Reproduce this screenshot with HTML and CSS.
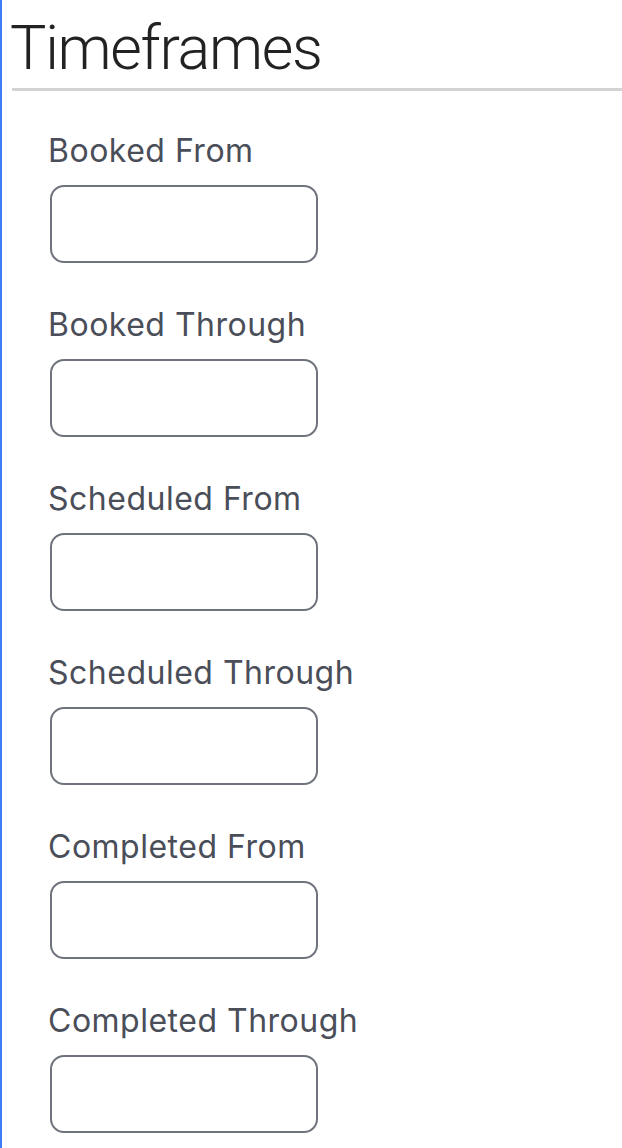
FILE: index.html
```html
<!DOCTYPE html>
<html>
<head>
<meta charset="utf-8">
<link rel="stylesheet" href="styles.css">
</head>
<body>
<div class="page">
  <h1 class="title">Timeframes</h1>
  <div class="fields">
    <div class="field"><label class="label">Booked From</label><input class="box" type="text"></div>
    <div class="field"><label class="label">Booked Through</label><input class="box" type="text"></div>
    <div class="field"><label class="label">Scheduled From</label><input class="box" type="text"></div>
    <div class="field"><label class="label">Scheduled Through</label><input class="box" type="text"></div>
    <div class="field"><label class="label">Completed From</label><input class="box" type="text"></div>
    <div class="field"><label class="label">Completed Through</label><input class="box" type="text"></div>
  </div>
</div>
</body>
</html>
```
FILE: styles.css
```css
html, body {
  margin: 0;
  padding: 0;
  background: #ffffff;
}
.page {
  min-height: 1148px;
  box-sizing: border-box;
  border-left: 2px solid #3d7cf5;
  padding-left: 10px;
}
.title {
  margin: 0;
  padding-top: 13px;
  padding-bottom: 5px;
  font-family: Roboto, "Noto Sans", sans-serif;
  font-weight: 300;
  font-size: 61px;
  line-height: 70px;
  letter-spacing: -1.3px;
  text-indent: -2px;
  color: #222222;
  border-bottom: 3px solid #d3d3d3;
}
.fields {
  display: flex;
  flex-direction: column;
  padding-left: 36px;
  padding-top: 40px;
  gap: 42px;
}
.field {
  display: flex;
  flex-direction: column;
  gap: 14px;
}
.label {
  font-family: Inter, "Noto Sans", sans-serif;
  font-size: 32px;
  line-height: 40px;
  letter-spacing: 0.5px;
  color: #4a4e59;
}
.box {
  box-sizing: border-box;
  width: 268px;
  height: 78px;
  margin: 0 0 0 2px;
  border: 2px solid #6f737d;
  border-radius: 14px;
  background: #fff;
  outline: none;
}
```
